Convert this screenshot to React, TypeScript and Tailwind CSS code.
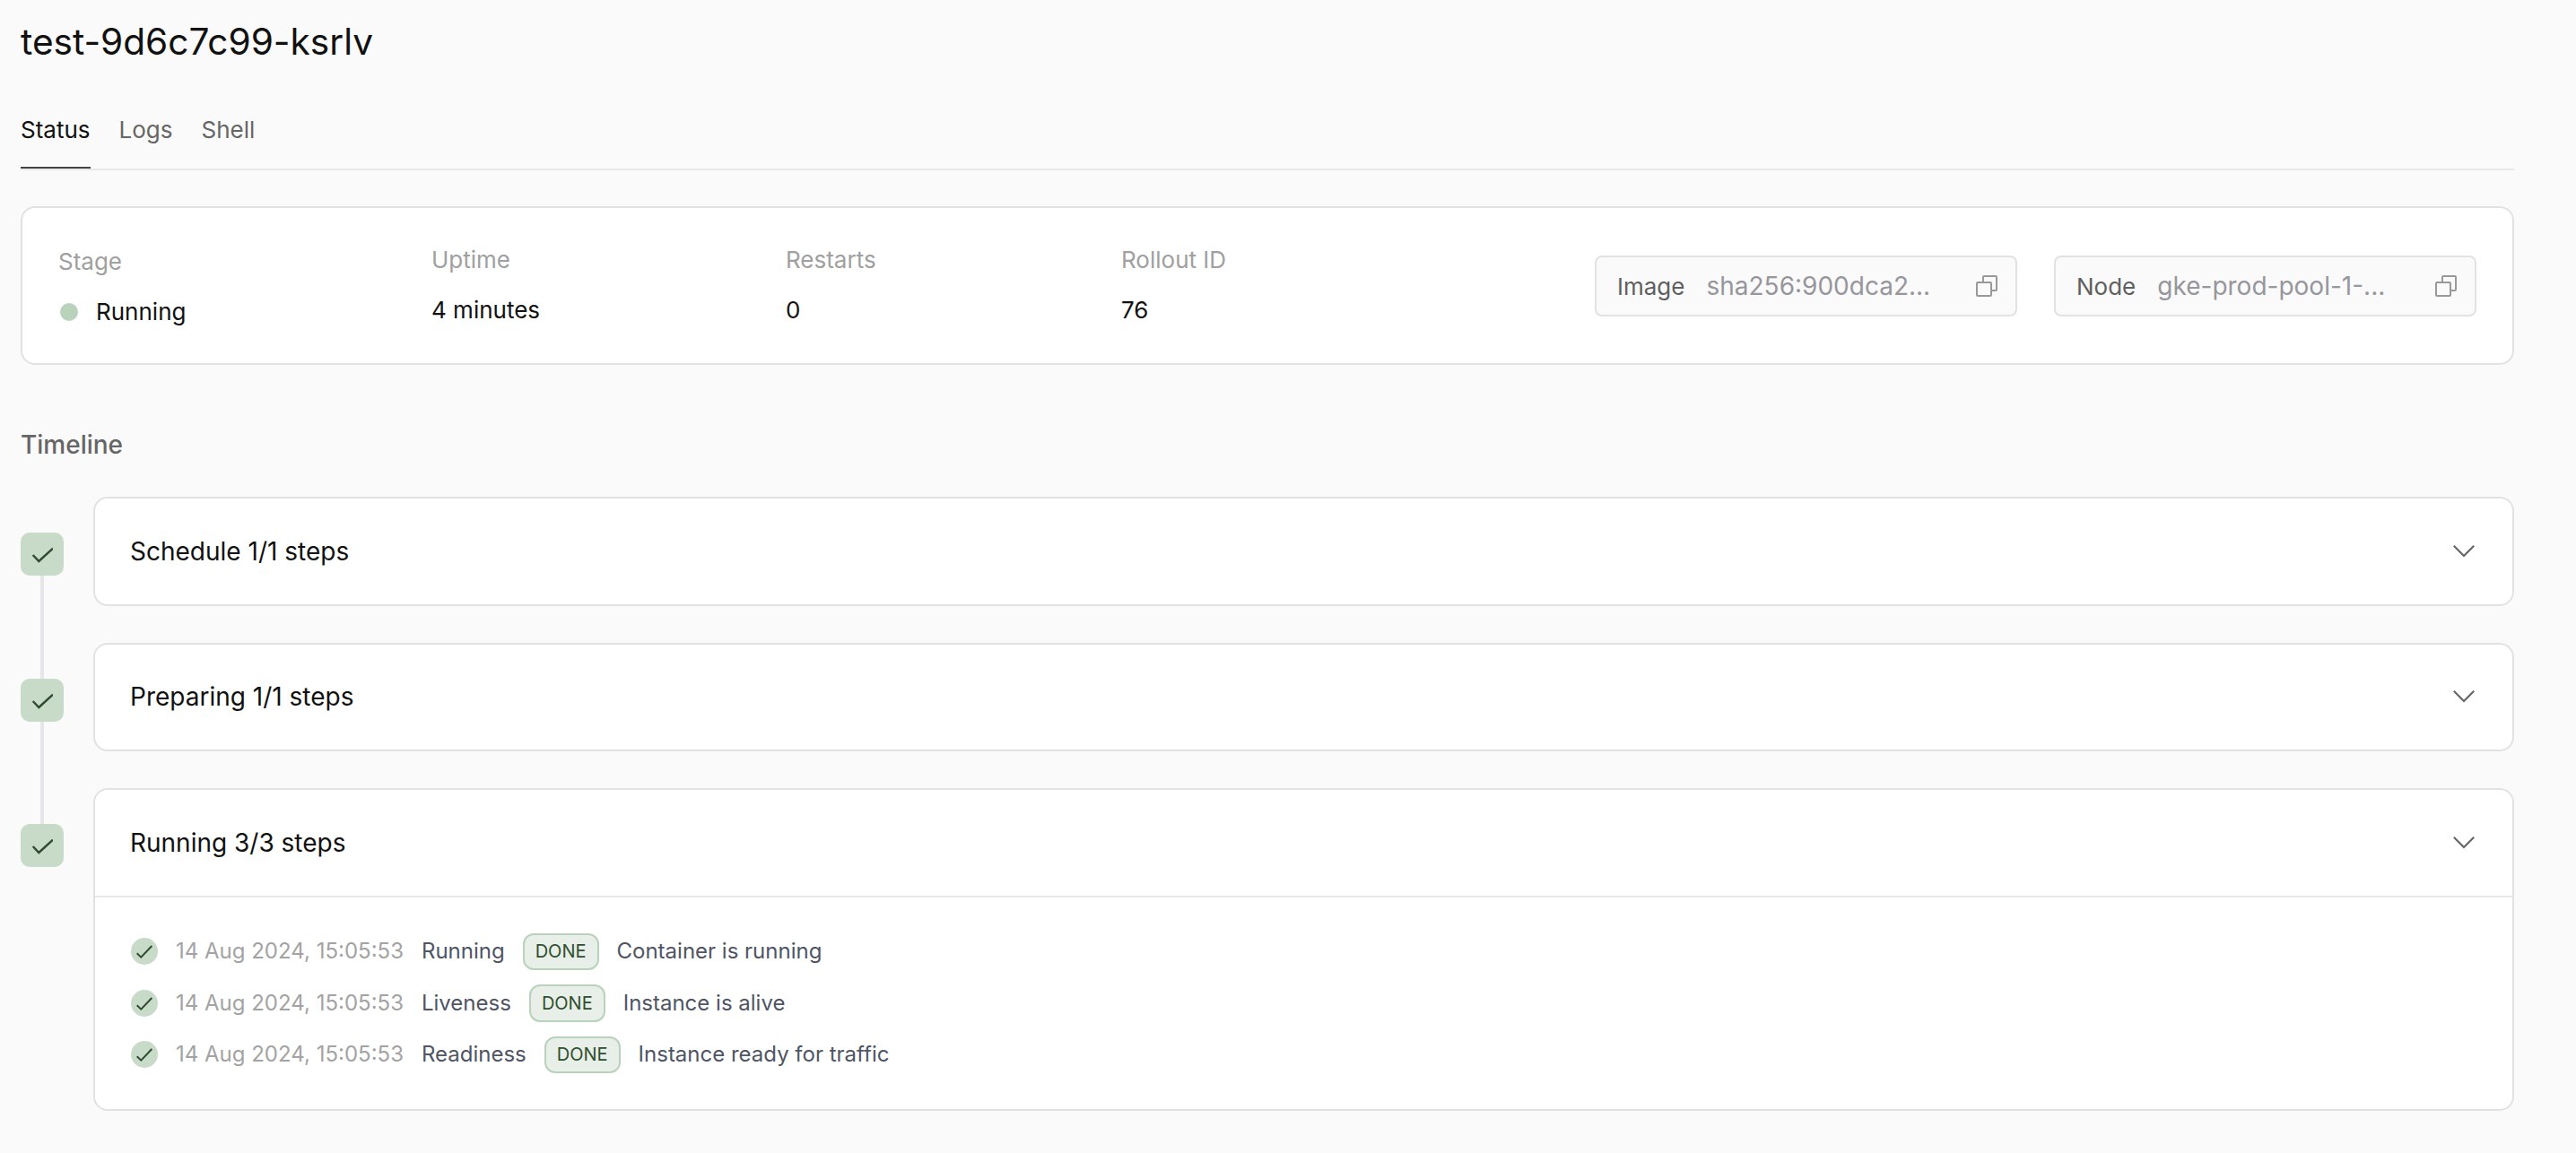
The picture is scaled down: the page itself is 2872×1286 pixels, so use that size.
import { ReactNode } from 'react';

const steps = [
  { name: 'Running', message: 'Container is running' },
  { name: 'Liveness', message: 'Instance is alive' },
  { name: 'Readiness', message: 'Instance ready for traffic' },
];

function ChevronIcon() {
  return (
    <svg viewBox="0 0 24 14" fill="none" stroke="#666666" strokeWidth="2.2" className="w-6 h-3.5 shrink-0">
      <path d="M0.8 0.8 L12 12 L23.2 0.8" />
    </svg>
  );
}

function CopyIcon() {
  return (
    <svg viewBox="0 0 24 24" fill="none" stroke="#999999" strokeWidth="2" className="w-6 h-6 shrink-0">
      <rect x="1" y="8" width="16" height="15" rx="1" />
      <path d="M8 8 V2 A1 1 0 0 1 9 1 H22 A1 1 0 0 1 23 2 V16 A1 1 0 0 1 22 17 H17" />
    </svg>
  );
}

function Stat({ label, className, children }: { label: string; className: string; children: ReactNode }) {
  return (
    <div className={`flex flex-col gap-[24px] shrink-0 ${className}`}>
      <span className="text-[26px] leading-[32px] text-[#a0a0a0]">{label}</span>
      <span className="text-[26px] leading-[32px] text-[#111111]">{children}</span>
    </div>
  );
}

function Chip({ label, value }: { label: string; value: string }) {
  return (
    <div className="w-[471px] h-[68px] flex items-center gap-[24px] pl-[23px] pr-[20px] bg-[#fafafa] border-2 border-[#e2e2e4] rounded-lg">
      <span className="text-[26px] text-[#5f5f5f]">{label}</span>
      <span className="flex-1 text-[28px] text-[#96969c] truncate">{value}</span>
      <CopyIcon />
    </div>
  );
}

function StepBox({ last }: { last?: boolean }) {
  return (
    <div className="w-12 shrink-0 flex flex-col items-center pt-[40px] self-stretch">
      <div className="w-12 h-12 shrink-0 rounded-[10px] bg-[#c8dbc9] flex items-center justify-center">
        <svg viewBox="0 0 24 24" fill="none" stroke="#2f4a2d" strokeWidth="2.4" className="w-6 h-6">
          <path d="M1.7 13 L8.3 20 L24 5.7" />
        </svg>
      </div>
      {!last && <div className="w-1 flex-1 bg-[#e5e5ea] -mb-[81px]" />}
    </div>
  );
}

function Header({ title }: { title: string }) {
  return (
    <div className="h-[117.5px] flex items-center justify-between pl-[39px] pr-[42px]">
      <span className="text-[28px] text-[#111111]">{title}</span>
      <ChevronIcon />
    </div>
  );
}

export default function App() {
  return (
    <div className="min-h-[1286px] bg-[#fafafa] pl-[23px] pr-[69px] overflow-hidden font-['Inter',sans-serif] [font-optical-sizing:none]">
      <h1 className="pt-[23px] text-[40.6px] leading-[48px] font-normal text-[#111111]">test-9d6c7c99-ksrlv</h1>

      {/* Tabs */}
      <div className="mt-[49px] flex items-start gap-8 border-b-2 border-[#e8e8e8] h-[70px] text-[26px] leading-[32px] text-[#666666]">
        <span className="h-[68px] pt-[9px] border-b-2 border-[#444444] text-[#111111]">Status</span>
        <span className="pt-[9px]">Logs</span>
        <span className="pt-[9px]">Shell</span>
      </div>

      {/* Summary card */}
      <div className="mt-[40px] h-[177px] flex items-center px-10 bg-white border-2 border-[#e2e2e2] rounded-2xl">
        <Stat label="Stage" className="w-[416px] pt-[2px]">
          <span className="flex items-center gap-[20px] pl-[2px]">
            <span className="w-5 h-5 rounded-full bg-[#b8d2bb]" />
            Running
          </span>
        </Stat>
        <Stat label="Uptime" className="w-[395px] pb-[1px]">4 minutes</Stat>
        <Stat label="Restarts" className="w-[374px] pb-[1px]">0</Stat>
        <Stat label="Rollout ID" className="w-[200px] pb-[1px]">76</Stat>
        <div className="ml-auto mt-[1px] flex gap-[41px]">
          <Chip label="Image" value="sha256:900dca2..." />
          <Chip label="Node" value="gke-prod-pool-1-..." />
        </div>
      </div>

      {/* Timeline */}
      <h2 className="mt-[72px] text-[28px] leading-[34px] font-medium text-[#666666]">Timeline</h2>

      <div className="mt-[41px] flex flex-col gap-[41px]">
        <div className="flex gap-[33px]">
          <StepBox />
          <div className="flex-1 bg-white border-2 border-[#e2e2e2] rounded-2xl">
            <Header title="Schedule 1/1 steps" />
          </div>
        </div>
        <div className="flex gap-[33px]">
          <StepBox />
          <div className="flex-1 bg-white border-2 border-[#e2e2e2] rounded-2xl">
            <Header title="Preparing 1/1 steps" />
          </div>
        </div>
        <div className="flex gap-[33px]">
          <StepBox last />
          <div className="flex-1 bg-white border-2 border-[#e2e2e2] rounded-2xl">
            <Header title="Running 3/3 steps" />
            <div className="border-t-2 border-[#e8e8e8] pt-10 pb-10 pl-10 flex flex-col gap-4">
              {steps.map((step) => (
                <div key={step.name} className="flex items-center gap-5 h-[41.6px] text-[24px] text-[#4f5564]">
                  <span className="w-[30px] h-[30px] rounded-full bg-[#c8dbc9] flex items-center justify-center">
                    <svg viewBox="0 0 30 30" fill="none" stroke="#2f4a2d" strokeWidth="2" className="w-[30px] h-[30px]">
                      <path d="M6.7 17.3 L11.3 21.7 L23.3 9" />
                    </svg>
                  </span>
                  <span className="text-[#a3a3a3]">14 Aug 2024, 15:05:53</span>
                  <span>{step.name}</span>
                  <span className="h-[41.6px] px-[12px] flex items-center bg-[#e7efe8] border-2 border-[#b8d2bb] rounded-xl text-[20px] text-[#2f4f2e]">DONE</span>
                  <span>{step.message}</span>
                </div>
              ))}
            </div>
          </div>
        </div>
      </div>
    </div>
  );
}
